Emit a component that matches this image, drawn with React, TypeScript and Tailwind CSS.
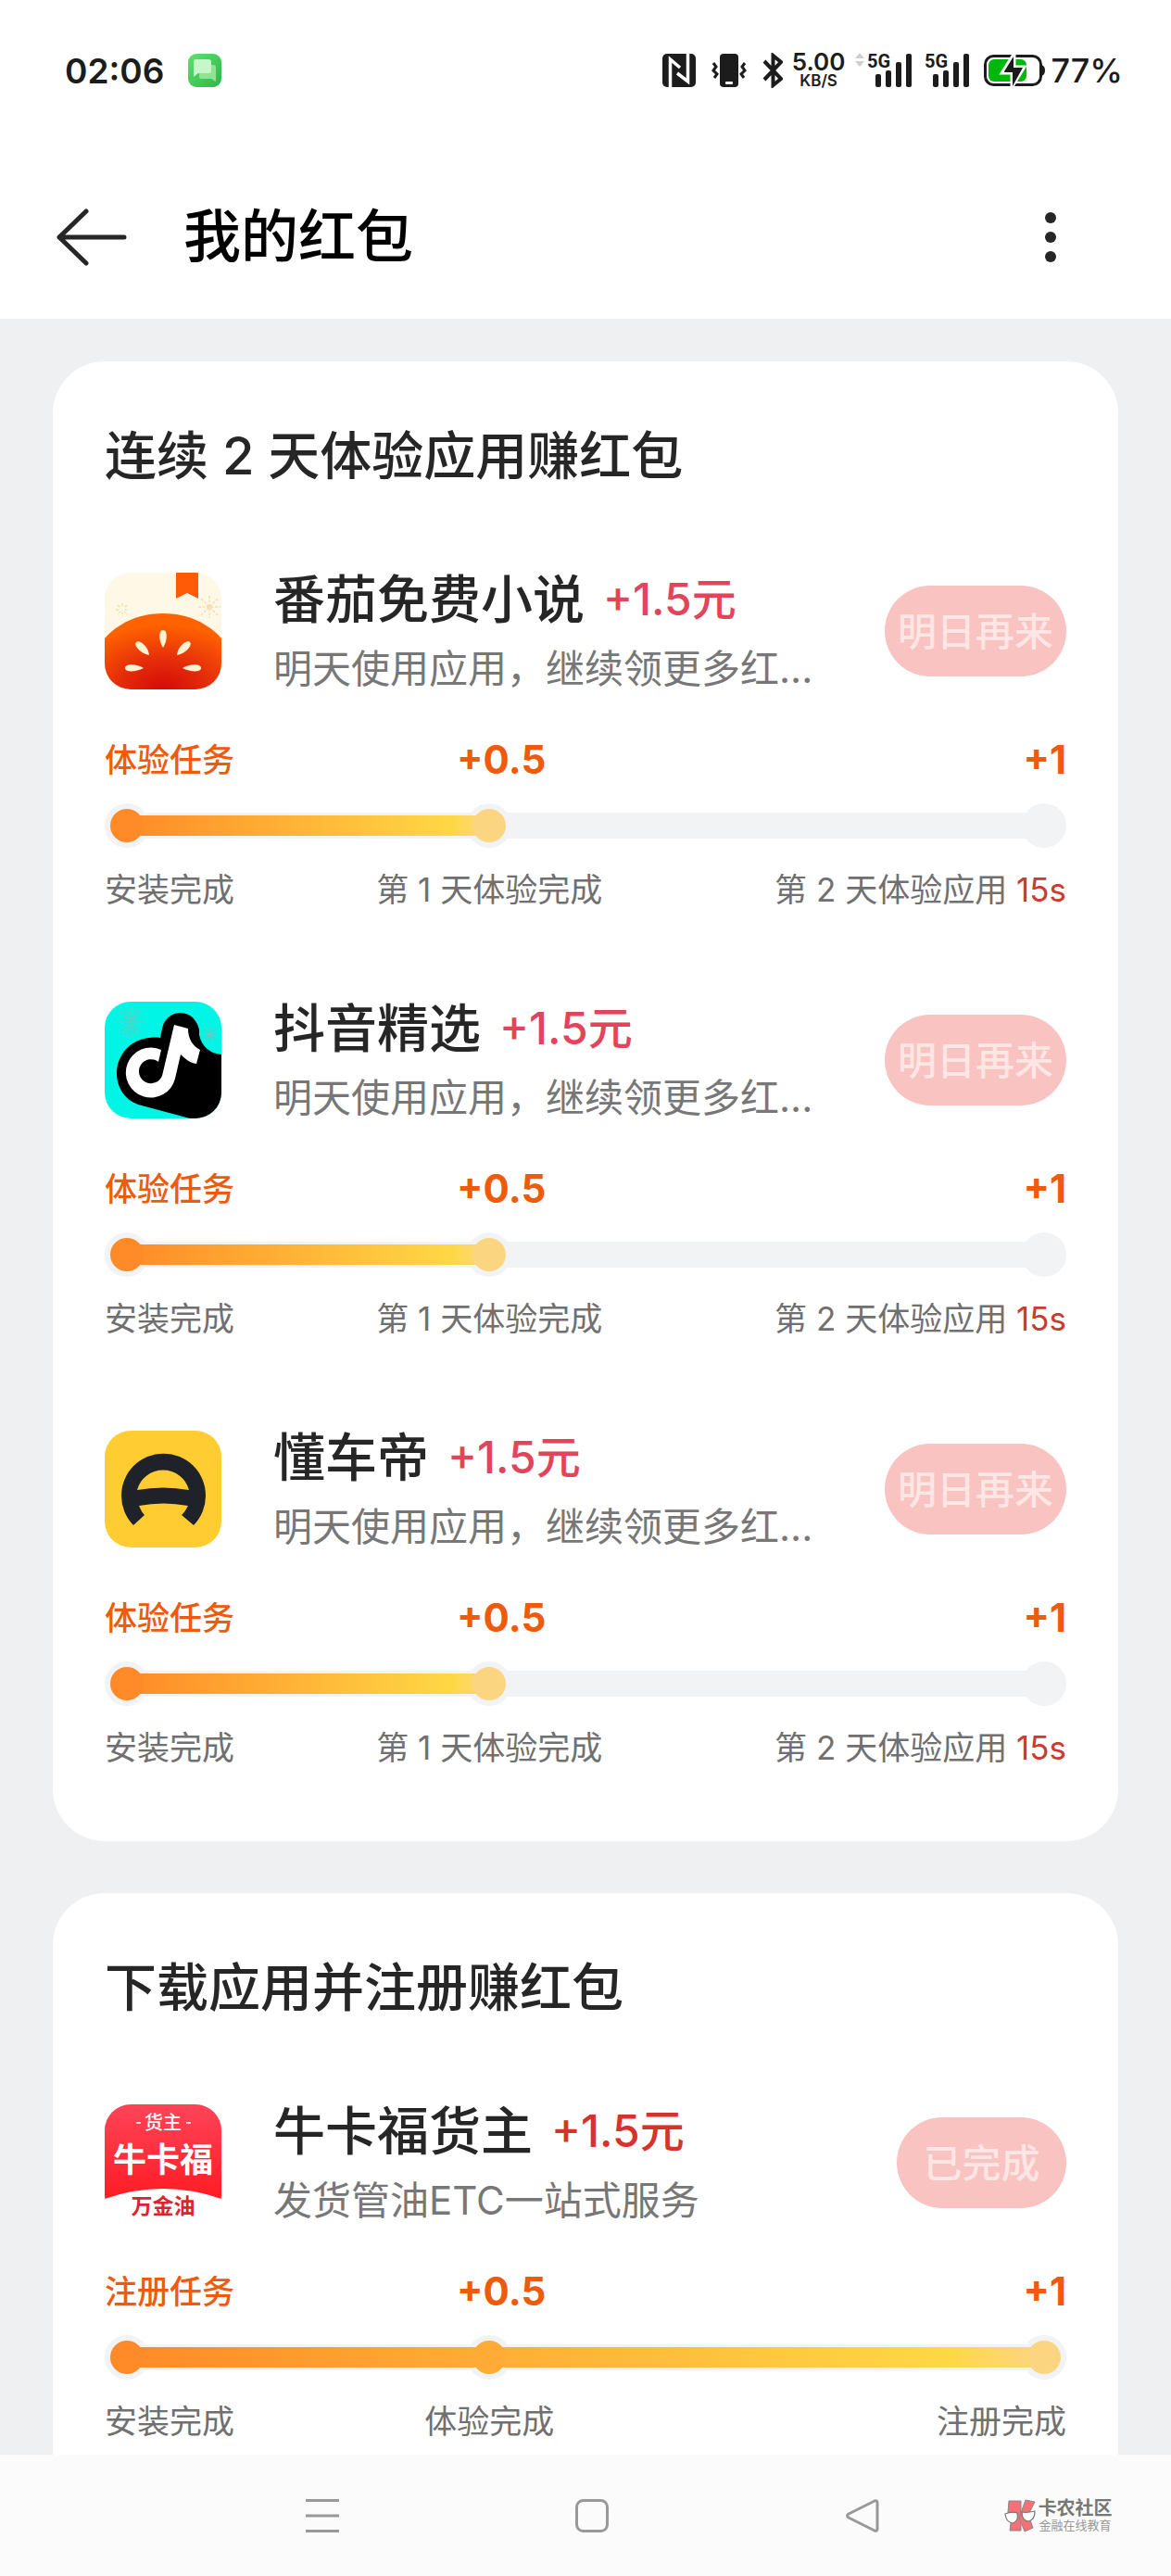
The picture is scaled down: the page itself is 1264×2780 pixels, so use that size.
import React from 'react';
import { clsx } from 'clsx';

interface Task {
  id: string;
  name: string;
  reward: string;
  rewardTone: 'pink' | 'red';
  description: string;
  action: string;
  icon: React.ReactNode;
  taskLabel: string;
  steps: [string, string, string];
  timer?: string;
  done: 1 | 2;
}

interface Section {
  title: string;
  tasks: Task[];
}

const TomatoIcon = () => (
  <svg viewBox="0 0 126 126" className="size-full" aria-hidden="true">
    <defs>
      <radialGradient id="tomato" cx="0.5" cy="1" r="0.85">
        <stop offset="0" stopColor="#d40a08" />
        <stop offset="0.45" stopColor="#e42c0a" />
        <stop offset="1" stopColor="#ff6200" />
      </radialGradient>
    </defs>
    <rect width="126" height="126" fill="#fff8e6" />
    <path d="M77 0H101V28L89 22L77 28Z" fill="#ff5a06" />
    <g stroke="#f2dfb0" strokeWidth="1.5" strokeDasharray="3 1.5">
      <path d="M113 25V49M101 37H125M104 28L122 46M122 28L104 46" />
      <path d="M19 33V47M12 40H26M14 35L24 45M24 35L14 45" />
    </g>
    <circle cx="19" cy="40" r="3" fill="#fff8e6" />
    <path d="M0 71C14 55 36 44 63 44S112 55 126 71V126H0Z" fill="url(#tomato)" />
    <g fill="#fff3d2">
      <path d="M63 81C58 73 58 62 63 62S68 73 63 81Z" />
      <path d="M48 89C38 87 31 78 34 75S47 79 48 89Z" />
      <path d="M78 89C88 87 95 78 92 75S79 79 78 89Z" />
      <path d="M42 103C34 107 22 108 22 103S34 98 42 103Z" />
      <path d="M84 103C92 107 104 108 104 103S92 98 84 103Z" />
    </g>
  </svg>
);

const DouyinIcon = () => (
  <svg viewBox="0 0 126 126" className="size-full" aria-hidden="true">
    <rect width="126" height="126" fill="#00f5e6" />
    <g stroke="#5fcfc0" strokeWidth="2" strokeDasharray="3 1.5">
      <path d="M28 6V38M12 22H44M17 11L39 33M39 11L17 33M22 8L34 36M34 8L22 36" />
      <path d="M113 26V44M104 35H122M107 29L119 41M119 29L107 41" />
    </g>
    <path
      d="M126 57C114 56 105 49 102 36V30C99 18 91 12 81 12C70 13 64 20 62 29L60 39C36 36 16 50 13 74C12 90 20 105 36 111L92 126H126Z"
      fill="#000"
    />
    <path
      d="M75 25L90 29C90 40 95 48 103 52L99 67C92 66 87 62 82 57L76 83A27 27 0 1 1 61 52L58 65A13 13 0 1 0 62 80Z"
      fill="#fff"
    />
  </svg>
);

const CarIcon = () => (
  <svg viewBox="0 0 126 126" className="size-full" aria-hidden="true">
    <rect width="126" height="126" fill="#ffcd32" />
    <path
      fillRule="evenodd"
      d="M31 102A45.5 45.5 0 1 1 96 102L83 91C86 88 88 85 90 81Q63 76 37 81C39 85 40 88 43 91ZM35 64A29 29 0 0 1 91 64Q63 59 35 64Z"
      fill="#1f2229"
    />
  </svg>
);

const CargoIcon = () => (
  <svg viewBox="0 0 126 126" className="size-full" aria-hidden="true">
    <defs>
      <linearGradient id="cargo" x1="0" y1="0" x2="0" y2="1">
        <stop offset="0" stopColor="#ff4458" />
        <stop offset="1" stopColor="#ff1c24" />
      </linearGradient>
    </defs>
    <rect width="126" height="126" fill="#fff" />
    <path d="M0 0H126V102Q63 80 0 102Z" fill="url(#cargo)" />
    <path d="M34 20H39M88 20H93" stroke="#ffd5d8" strokeWidth="2" />
    <g textAnchor="middle">
      <text x="63" y="27" fontSize="20" fontWeight="500" fill="#fff">货主</text>
      <text x="63" y="73" fontSize="36" fontWeight="700" fill="#fff">牛卡福</text>
      <text x="63" y="118" fontSize="23" fontWeight="700" fill="#dc2430">万金油</text>
    </g>
  </svg>
);

const dailySteps: [string, string, string] = ['安装完成', '第 1 天体验完成', '第 2 天体验应用'];

const sections: Section[] = [
  {
    title: '连续 2 天体验应用赚红包',
    tasks: [
      {
        id: 'fanqie',
        name: '番茄免费小说',
        reward: '+1.5元',
        rewardTone: 'pink',
        description: '明天使用应用，继续领更多红...',
        action: '明日再来',
        icon: <TomatoIcon />,
        taskLabel: '体验任务',
        steps: dailySteps,
        timer: '15s',
        done: 1,
      },
      {
        id: 'douyin',
        name: '抖音精选',
        reward: '+1.5元',
        rewardTone: 'pink',
        description: '明天使用应用，继续领更多红...',
        action: '明日再来',
        icon: <DouyinIcon />,
        taskLabel: '体验任务',
        steps: dailySteps,
        timer: '15s',
        done: 1,
      },
      {
        id: 'dongchedi',
        name: '懂车帝',
        reward: '+1.5元',
        rewardTone: 'pink',
        description: '明天使用应用，继续领更多红...',
        action: '明日再来',
        icon: <CarIcon />,
        taskLabel: '体验任务',
        steps: dailySteps,
        timer: '15s',
        done: 1,
      },
    ],
  },
  {
    title: '下载应用并注册赚红包',
    tasks: [
      {
        id: 'niukafu',
        name: '牛卡福货主',
        reward: '+1.5元',
        rewardTone: 'red',
        description: '发货管油ETC一站式服务',
        action: '已完成',
        icon: <CargoIcon />,
        taskLabel: '注册任务',
        steps: ['安装完成', '体验完成', '注册完成'],
        done: 2,
      },
    ],
  },
];

const Signal = () => (
  <svg width="52" height="48" viewBox="0 -5 52 48" aria-hidden="true">
    <text x="1" y="16" fontSize="20" fontWeight="700" fill="#1c1c1c" className="font-['Roboto']">5G</text>
    <g fill="#1c1c1c">
      <rect x="10" y="23" width="6" height="14" rx="2" />
      <rect x="21" y="19" width="6" height="18" rx="2" />
      <rect x="32" y="10" width="6" height="27" rx="2" />
      <rect x="43" y="1" width="6" height="36" rx="2" />
    </g>
  </svg>
);

const StatusBar = () => (
  <div className="flex h-[152px] items-center justify-between pl-[70px] pr-[52px] text-[#1c1c1c]">
    <div className="flex items-center gap-[26px]">
      <span className="text-[37px] leading-none font-semibold">02:06</span>
      <svg width="36" height="36" viewBox="0 0 36 36" aria-hidden="true">
        <defs>
          <linearGradient id="msg" x1="0" y1="0" x2="1" y2="1">
            <stop offset="0" stopColor="#5fe06c" />
            <stop offset="1" stopColor="#2cb84a" />
          </linearGradient>
        </defs>
        <rect width="36" height="36" rx="9" fill="url(#msg)" />
        <path d="M12 13Q12 12 14 12H27Q30 12 30 15V30L25 27H14Q12 27 12 25Z" fill="#8fe58f" />
        <path d="M6 8Q6 6 8 6H22Q25 6 25 9V18Q25 21 22 21H11L6 25Z" fill="#c9f5cb" />
      </svg>
    </div>

    <div className="flex items-center">
      <svg width="36" height="36" viewBox="0 0 36 36" className="mr-[17px]" aria-hidden="true">
        <rect width="36" height="36" rx="5" fill="#1c1c1c" />
        <path d="M8.500 36V6L19 15M27.500 0V30L16 21" fill="none" stroke="#fff" strokeWidth="3.500" />
      </svg>
      <svg width="38" height="36" viewBox="0 0 38 36" className="mr-[17px]" aria-hidden="true">
        <rect x="9" width="20" height="36" rx="4" fill="#1c1c1c" />
        <rect x="15" y="30" width="8" height="3" rx="1" fill="#fff" />
        <path
          d="M2 10L5 14L2 18L6 22L3 26M36 10L33 14L36 18L32 22L35 26"
          fill="none"
          stroke="#1c1c1c"
          strokeWidth="3"
        />
      </svg>
      <svg width="22" height="38" viewBox="0 0 22 38" className="mr-[10px]" aria-hidden="true">
        <path d="M2 9L20 28L11.500 35V3L20 10L2 29" fill="none" stroke="#1c1c1c" strokeWidth="4" />
      </svg>
      <div className="mr-[11px] flex flex-col items-center font-semibold">
        <span className="text-[26px] leading-[22px]">5.00</span>
        <span className="text-[17px] leading-[18px]">KB/S</span>
      </div>
      <svg width="10" height="38" viewBox="0 0 10 38" className="mr-[2px]" aria-hidden="true">
        <path d="M5 0L10 6H0ZM5 15L10 9H0Z" fill="#cfcfcf" />
      </svg>
      <div className="flex items-center gap-[10px] pr-[13px]">
        <Signal />
        <Signal />
      </div>
      <svg width="66" height="38" viewBox="0 0 66 38" className="mr-[6px]" aria-hidden="true">
        <rect x="1.500" y="3.500" width="60" height="31" rx="9" fill="#fff" stroke="#1c1c1c" strokeWidth="3" />
        <path d="M62 13Q66 14 66 19T62 25Z" fill="#1c1c1c" />
        <rect x="5" y="7" width="41" height="24" rx="6" fill="#00b80c" />
        <path d="M33 0L19 22H30V38L44 15H33Z" fill="#1c1c1c" stroke="#fff" strokeWidth="3" />
        <path d="M32 4L22 21H31V36L42 16H32Z" fill="#1c1c1c" />
      </svg>
      <span className="text-[36px] leading-none font-medium">77%</span>
    </div>
  </div>
);

const AppBar = () => (
  <div className="mt-4 flex h-[176px] items-center pl-[61px] pr-[118px]">
    <button type="button" aria-label="返回" className="mr-[61px]">
      <svg width="76" height="64" viewBox="0 0 76 64" fill="none" aria-hidden="true">
        <path
          d="M73 32H3M32 4L3 32L32 60"
          stroke="#262626"
          strokeWidth="5"
          strokeLinecap="round"
          strokeLinejoin="round"
        />
      </svg>
    </button>
    <h1 className="flex-1 text-[62px] leading-[80px] font-medium text-black">我的红包</h1>
    <button type="button" aria-label="更多">
      <svg width="24" height="60" viewBox="0 0 24 60" fill="#262626" aria-hidden="true">
        <circle cx="12" cy="9" r="6" />
        <circle cx="12" cy="30" r="6" />
        <circle cx="12" cy="51" r="6" />
      </svg>
    </button>
  </div>
);

const ProgressTrack = ({ done }: { done: 1 | 2 }) => {
  const full = done === 2;

  return (
    <div className="relative mt-[23px] flex h-12 items-center">
      <div className="mx-6 h-7 flex-1 bg-[#f2f3f5]" />
      {/* halos behind the stops */}
      <span className="absolute left-0 size-12 rounded-full bg-[#f2f3f5]" />
      <span className="absolute left-[40%] size-12 -translate-x-1/2 rounded-full bg-[#f2f3f5]" />
      <span className="absolute right-0 size-12 rounded-full bg-[#f2f3f5]" />
      <span
        className={clsx(
          'absolute left-6 h-[22px] bg-linear-to-r from-[#ff8a27] via-[#ffd845] via-90% to-[#fcd580]',
          full ? 'right-6' : 'right-[60%]'
        )}
      />
      <span className="absolute left-[6px] size-9 rounded-full bg-[#ff8a27]" />
      <span
        className={clsx(
          'absolute left-[40%] size-9 -translate-x-1/2 rounded-full',
          full ? 'bg-[#ffab35]' : 'bg-[#fcd580]'
        )}
      />
      {full && <span className="absolute right-[6px] size-9 rounded-full bg-[#fcd580]" />}
    </div>
  );
};

const TaskItem = ({ task }: { task: Task }) => (
  <li>
    <div className="flex items-center">
      <div className="mr-14 size-[126px] shrink-0 overflow-hidden rounded-[28px]">{task.icon}</div>
      <div className="min-w-0 flex-1">
        <div className="flex items-center gap-5 leading-[70px]">
          <h3 className="text-[56px] font-medium text-[#262626]">{task.name}</h3>
          <span
            className={clsx(
              'text-[48px] font-medium',
              task.rewardTone === 'pink' ? 'text-[#e0455c]' : 'text-[#d4342e]'
            )}
          >
            {task.reward}
          </span>
        </div>
        <p className="mt-3 truncate text-[42px] leading-[56px] text-[#777]">{task.description}</p>
      </div>
      <button
        type="button"
        className="h-[98px] min-w-[183px] shrink-0 rounded-full bg-[#f8c3c0] px-[14px] text-[42px] font-medium text-[#fde6e4]"
      >
        {task.action}
      </button>
    </div>

    <div className="mt-[46px] grid grid-cols-[1fr_2fr_2fr] items-center leading-[48px] text-[#ef5b0c]">
      <span className="text-[35px] font-medium whitespace-nowrap">{task.taskLabel}</span>
      <span className="pl-[26px] text-center text-[42px] font-bold">+0.5</span>
      <span className="text-right text-[42px] font-bold">+1</span>
    </div>

    <ProgressTrack done={task.done} />

    <div className="mt-[21px] grid grid-cols-[1fr_2fr_2fr] text-[35px] leading-[48px] whitespace-nowrap text-[#707070]">
      <span>{task.steps[0]}</span>
      <span className="text-center">{task.steps[1]}</span>
      <span className="text-right">
        {task.steps[2]}
        {task.timer && <span className="text-[#cc3a30]"> {task.timer}</span>}
      </span>
    </div>
  </li>
);

const NavBar = () => (
  <nav className="grid h-[131px] shrink-0 grid-cols-[14fr_14fr_14fr_9fr] items-center justify-items-center bg-[#fbfbfb] pl-[16%]">
    <button type="button" aria-label="最近任务">
      <svg width="36" height="36" viewBox="0 0 36 36" stroke="#999" strokeWidth="3" aria-hidden="true">
        <path d="M0 1.500H36M0 18H36M0 34.500H36" />
      </svg>
    </button>
    <button type="button" aria-label="主屏幕">
      <svg width="36" height="36" viewBox="0 0 36 36" fill="none" aria-hidden="true">
        <rect x="1.500" y="1.500" width="33" height="33" rx="7" stroke="#999" strokeWidth="3" />
      </svg>
    </button>
    <button type="button" aria-label="返回">
      <svg width="36" height="36" viewBox="0 0 36 36" fill="none" aria-hidden="true">
        <path
          d="M31 2Q34 1 34 4V32Q34 35 31 34L3 20Q0 18 3 16Z"
          stroke="#999"
          strokeWidth="3"
          strokeLinejoin="round"
        />
      </svg>
    </button>
    <div className="flex items-center gap-[3px] justify-self-start pl-[7px]">
      <svg width="34" height="36" viewBox="0 0 34 36" aria-hidden="true">
        <g fill="#f67078" stroke="#888" strokeWidth="1">
          <path d="M5 2H18V34H6L7 26L4 14Z" />
          <path d="M23 1L33 3L26 17L31 31L22 35L16 20Z" />
        </g>
        <g fill="#fff" stroke="#777" strokeWidth="1.200">
          <path d="M1 16Q8 13 14 15Q16 24 9 26Q2 25 1 16Z" />
          <path d="M19 14Q25 15 33 13Q33 23 26 24Q19 23 19 14Z" />
        </g>
      </svg>
      <div className="flex flex-col items-center whitespace-nowrap">
        <span className="text-[20px] leading-[20px] font-bold text-[#777]">卡农社区</span>
        <span className="text-[13px] leading-[16px] text-[#999]">金融在线教育</span>
      </div>
    </div>
  </nav>
);

export default function App() {
  return (
    <div className="flex h-screen flex-col bg-white font-['Inter','Noto_Sans_CJK_SC',sans-serif]">
      <header className="shrink-0">
        <StatusBar />
        <AppBar />
      </header>

      <main className="flex min-h-0 flex-1 flex-col gap-14 overflow-y-auto bg-[#eff0f2] px-[57px] pt-[46px] [scrollbar-width:none]">
        {sections.map((section) => (
          <section key={section.title} className="shrink-0 rounded-[56px] bg-white px-14 pt-[62px] pb-[77px]">
            <h2 className="text-[56px] leading-[80px] font-medium text-[#262626]">{section.title}</h2>
            <ul className="mt-20 flex flex-col gap-[91px]">
              {section.tasks.map((task) => (
                <TaskItem key={task.id} task={task} />
              ))}
            </ul>
          </section>
        ))}
      </main>

      <NavBar />
    </div>
  );
}
